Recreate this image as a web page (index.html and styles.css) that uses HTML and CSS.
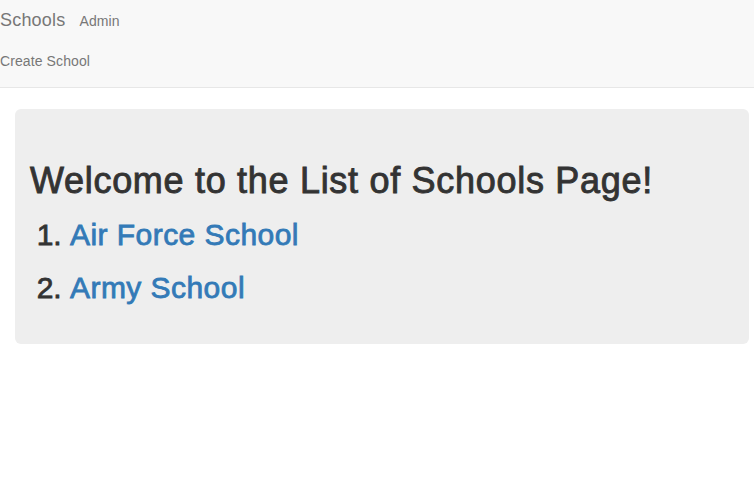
FILE: index.html
```html
<!DOCTYPE html>
<html>
<head>
<meta charset="utf-8">
<link rel="stylesheet" href="styles.css">
</head>
<body>
<nav class="navbar">
  <div class="nav-row">
    <a class="brand" href="#">Schools</a>
    <a class="nav-link" href="#">Admin</a>
  </div>
  <div class="nav-row second">
    <a class="nav-link" href="#">Create School</a>
  </div>
</nav>
<div class="container">
  <div class="jumbotron">
    <h1>Welcome to the List of Schools Page!</h1>
    <ol class="schools">
      <li><a href="#">Air Force School</a></li>
      <li><a href="#">Army School</a></li>
    </ol>
  </div>
</div>
</body>
</html>
```
FILE: styles.css
```css
html, body {
  margin: 0;
  padding: 0;
  background: #fff;
  font-family: "Liberation Sans", Arial, sans-serif;
  font-size: 14px;
  line-height: 1.42857;
  color: #333;
}
a { text-decoration: none; }
.navbar {
  background: #f8f8f8;
  border-bottom: 1px solid #e7e7e7;
  height: 87px;
  margin-bottom: 21px;
}
.nav-row {
  display: flex;
  align-items: baseline;
  padding-top: 10px;
  height: 30px;
}
.nav-row.second {
  padding-top: 11px;
}
.brand {
  font-size: 18px;
  line-height: 20px;
  color: #777;
  margin-right: 14px;
  letter-spacing: 0.2px;
}
.nav-link {
  font-size: 14px;
  line-height: 20px;
  color: #777;
  letter-spacing: 0.1px;
}
.container {
  padding: 0 5px 0 15px;
}
.jumbotron {
  background: #eee;
  border-radius: 6px;
  padding: 30px 15px;
}
.jumbotron h1 {
  font-size: 36px;
  line-height: 1.1;
  font-weight: 500;
  margin: 22px 0 0;
  color: #333;
  letter-spacing: 0.7px;
  -webkit-text-stroke: 0.9px #333;
}
.schools {
  margin: 0;
  padding-left: 40px;
}
.schools li {
  font-size: 30px;
  line-height: 33px;
  margin: 20px 0 10px;
  color: #333;
  -webkit-text-stroke: 0.8px #333;
}
.schools li:first-child {
  margin-top: 17px;
}
.schools a {
  color: #337ab7;
  letter-spacing: 0.45px;
  -webkit-text-stroke: 0.8px #337ab7;
}
```
